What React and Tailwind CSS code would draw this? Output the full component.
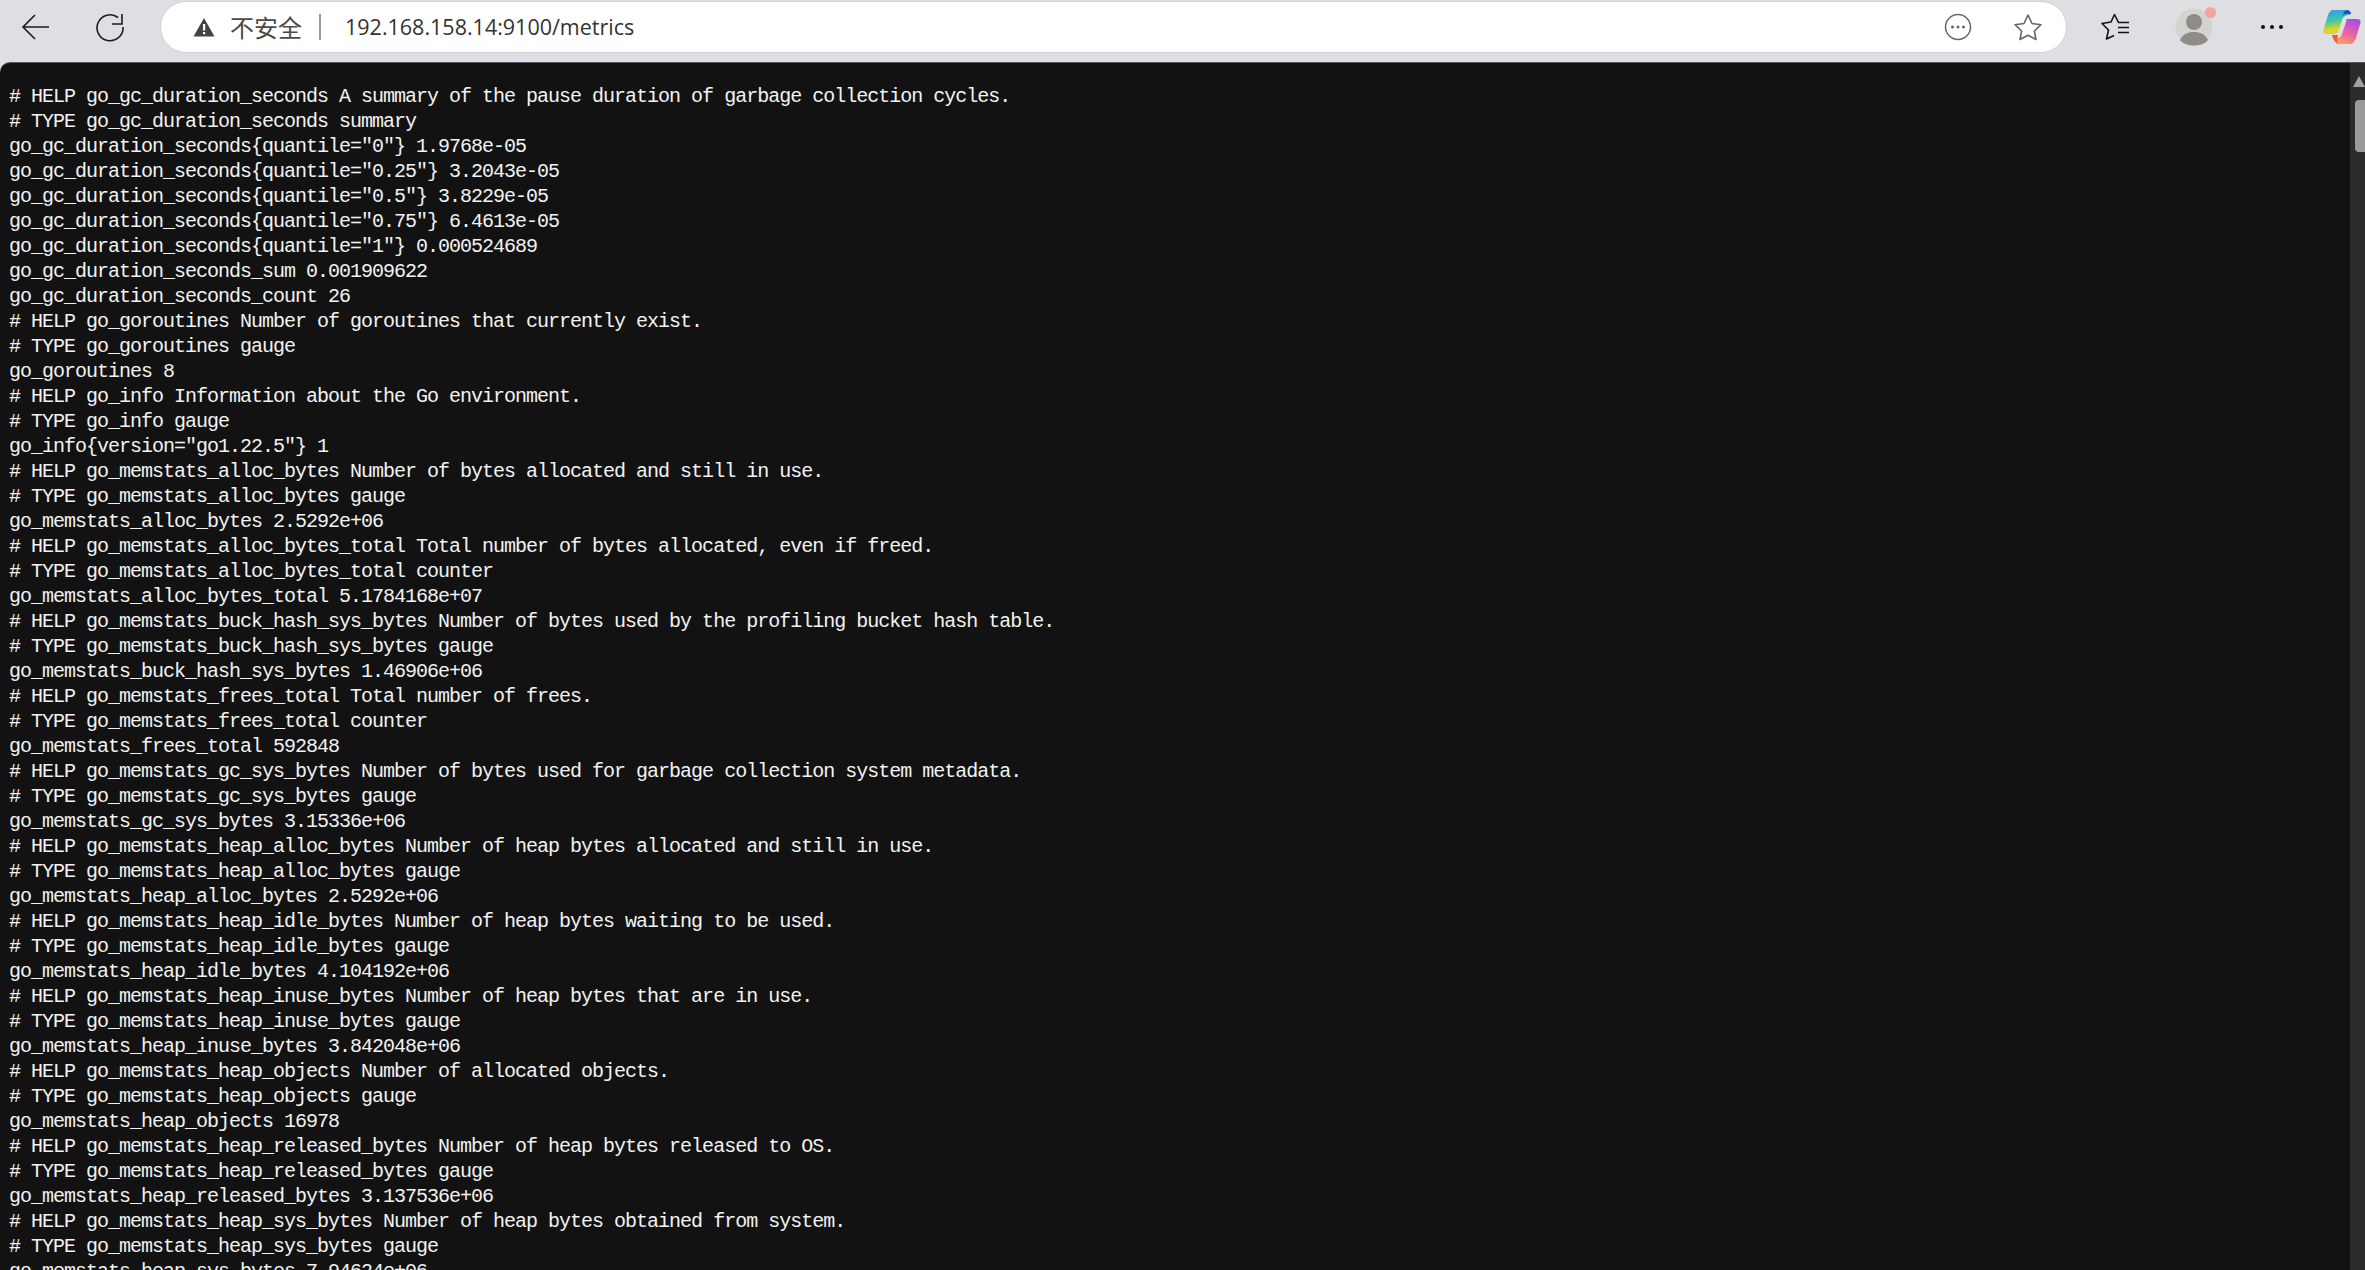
import React from "react";

const LINES = [
  "# HELP go_gc_duration_seconds A summary of the pause duration of garbage collection cycles.",
  "# TYPE go_gc_duration_seconds summary",
  'go_gc_duration_seconds{quantile="0"} 1.9768e-05',
  'go_gc_duration_seconds{quantile="0.25"} 3.2043e-05',
  'go_gc_duration_seconds{quantile="0.5"} 3.8229e-05',
  'go_gc_duration_seconds{quantile="0.75"} 6.4613e-05',
  'go_gc_duration_seconds{quantile="1"} 0.000524689',
  "go_gc_duration_seconds_sum 0.001909622",
  "go_gc_duration_seconds_count 26",
  "# HELP go_goroutines Number of goroutines that currently exist.",
  "# TYPE go_goroutines gauge",
  "go_goroutines 8",
  "# HELP go_info Information about the Go environment.",
  "# TYPE go_info gauge",
  'go_info{version="go1.22.5"} 1',
  "# HELP go_memstats_alloc_bytes Number of bytes allocated and still in use.",
  "# TYPE go_memstats_alloc_bytes gauge",
  "go_memstats_alloc_bytes 2.5292e+06",
  "# HELP go_memstats_alloc_bytes_total Total number of bytes allocated, even if freed.",
  "# TYPE go_memstats_alloc_bytes_total counter",
  "go_memstats_alloc_bytes_total 5.1784168e+07",
  "# HELP go_memstats_buck_hash_sys_bytes Number of bytes used by the profiling bucket hash table.",
  "# TYPE go_memstats_buck_hash_sys_bytes gauge",
  "go_memstats_buck_hash_sys_bytes 1.46906e+06",
  "# HELP go_memstats_frees_total Total number of frees.",
  "# TYPE go_memstats_frees_total counter",
  "go_memstats_frees_total 592848",
  "# HELP go_memstats_gc_sys_bytes Number of bytes used for garbage collection system metadata.",
  "# TYPE go_memstats_gc_sys_bytes gauge",
  "go_memstats_gc_sys_bytes 3.15336e+06",
  "# HELP go_memstats_heap_alloc_bytes Number of heap bytes allocated and still in use.",
  "# TYPE go_memstats_heap_alloc_bytes gauge",
  "go_memstats_heap_alloc_bytes 2.5292e+06",
  "# HELP go_memstats_heap_idle_bytes Number of heap bytes waiting to be used.",
  "# TYPE go_memstats_heap_idle_bytes gauge",
  "go_memstats_heap_idle_bytes 4.104192e+06",
  "# HELP go_memstats_heap_inuse_bytes Number of heap bytes that are in use.",
  "# TYPE go_memstats_heap_inuse_bytes gauge",
  "go_memstats_heap_inuse_bytes 3.842048e+06",
  "# HELP go_memstats_heap_objects Number of allocated objects.",
  "# TYPE go_memstats_heap_objects gauge",
  "go_memstats_heap_objects 16978",
  "# HELP go_memstats_heap_released_bytes Number of heap bytes released to OS.",
  "# TYPE go_memstats_heap_released_bytes gauge",
  "go_memstats_heap_released_bytes 3.137536e+06",
  "# HELP go_memstats_heap_sys_bytes Number of heap bytes obtained from system.",
  "# TYPE go_memstats_heap_sys_bytes gauge",
  "go_memstats_heap_sys_bytes 7.94624e+06",
];

function BackIcon() {
  return (
    <svg width="30" height="30" viewBox="0 0 30 30" fill="none" stroke="#1c1c1c" strokeWidth="1.6">
      <path d="M2 15H28M14 3L2 15L14 27" />
    </svg>
  );
}

function ReloadIcon() {
  return (
    <svg width="30" height="30" viewBox="0 0 30 30" fill="none" stroke="#1c1c1c" strokeWidth="1.6">
      <path d="M23 5.5A13 13 0 1 0 28 15" />
      <path d="M17 12H27V2" />
    </svg>
  );
}

function WarnIcon() {
  return (
    <svg width="22" height="20" viewBox="0 0 22 20">
      <path d="M11 1L21.5 19.5H0.5Z" fill="#444444" />
      <rect x="10" y="7" width="2.2" height="6.5" fill="#ffffff" />
      <rect x="10" y="15" width="2.2" height="2.2" fill="#ffffff" />
    </svg>
  );
}

function DotsCircleIcon() {
  return (
    <svg width="28" height="28" viewBox="0 0 28 28" fill="none">
      <circle cx="14" cy="14" r="12.5" stroke="#666666" strokeWidth="1.5" />
      <circle cx="8.5" cy="14" r="1.5" fill="#666666" />
      <circle cx="14" cy="14" r="1.5" fill="#666666" />
      <circle cx="19.5" cy="14" r="1.5" fill="#666666" />
    </svg>
  );
}

function StarIcon() {
  return (
    <svg width="30" height="28" viewBox="0 0 30 28" fill="none" stroke="#666666" strokeWidth="1.6" strokeLinejoin="round">
      <path d="M15 2L19 10.5L28 11.7L21.4 18L23 26.5L15 22.3L7 26.5L8.6 18L2 11.7L11 10.5Z" />
    </svg>
  );
}

function FavoritesIcon() {
  return (
    <svg width="30" height="28" viewBox="0 0 30 28" fill="none" stroke="#111111" strokeWidth="1.6" strokeLinejoin="round">
      <path d="M17.5 9.5L13.5 1.5L10 9L1 10.5L7.5 17L5.5 26L13 22.5" />
      <path d="M17 9.5H28M17 14.5H28M17 19.5H28" />
    </svg>
  );
}

function ProfileIcon() {
  return (
    <svg width="38" height="38" viewBox="0 0 38 38">
      <circle cx="19" cy="19" r="18.5" fill="#d4d3cf" />
      <circle cx="19" cy="14" r="8" fill="#8f8b87" />
      <path d="M5 32C8 26 13 24 19 24C25 24 30 26 33 32C30 36 24 37.5 19 37.5C14 37.5 8 36 5 32Z" fill="#8f8b87" />
    </svg>
  );
}

function MoreIcon() {
  return (
    <svg width="24" height="6" viewBox="0 0 24 6" fill="#111111">
      <circle cx="3" cy="3" r="2" />
      <circle cx="12" cy="3" r="2" />
      <circle cx="21" cy="3" r="2" />
    </svg>
  );
}

function CopilotIcon() {
  return (
    <svg width="38" height="36" viewBox="0 0 38 36">
      <defs>
        <linearGradient id="cpLeft" x1="0.3" y1="0" x2="0.5" y2="1">
          <stop offset="0" stopColor="#2f9df0" />
          <stop offset="0.45" stopColor="#45c7a0" />
          <stop offset="0.8" stopColor="#e4d422" />
        </linearGradient>
        <linearGradient id="cpRight" x1="0.7" y1="0" x2="0.3" y2="1">
          <stop offset="0" stopColor="#a552dc" />
          <stop offset="0.55" stopColor="#ea62a8" />
          <stop offset="1" stopColor="#fba05a" />
        </linearGradient>
      </defs>
      <path d="M10 1H24L27 6C22 6 20 8 19 11L15 23C14 25 12 25 9 25H4C1 25 0 23 0.5 21L5 6C6 3 8 1 10 1Z" fill="url(#cpLeft)" />
      <path d="M24 1C26 1 28 3 28 5H23C21 5 20 6 19 8L21 3C21.5 2 23 1 24 1Z" fill="#2b49c8" />
      <path d="M24 10H34C37 10 38 12 37.5 14L33 29C32 32 30 35 27 35H14L11 29C16 30 18 28 19 25L23 13C23.5 11 23.5 10 24 10Z" fill="url(#cpRight)" />
      <path d="M9 26H15L14 31C13.5 33 15 35 17 35C13 35 10 31 9 26Z" fill="#ef5a3c" />
    </svg>
  );
}

export default function App() {
  return (
    <div className="h-screen w-full overflow-hidden flex flex-col bg-[#dedfe3]">
      {/* barra del navegador */}
      <div className="h-[62px] shrink-0 flex items-start font-['Open_Sans','Noto_Sans_CJK_SC',sans-serif]">
        <div className="w-[160px] h-[54px] shrink-0 flex items-center pl-[21px] gap-[44px]">
          <BackIcon />
          <ReloadIcon />
        </div>

        <div className="w-[1907px] h-[52px] mt-px shrink-0 flex items-center bg-white rounded-[26px] border border-[#d2d2d2] pl-[32px]">
          <WarnIcon />
          <span className="ml-[15px] text-[24px] text-[#4a4a4a] font-['Noto_Sans_CJK_SC',sans-serif]">不安全</span>
          <span className="ml-[17px] w-[2px] h-[26px] bg-[#999999]" />
          <span className="ml-[24px] text-[21.5px] text-[#333333]">192.168.158.14:9100/metrics</span>
          <div className="ml-auto flex items-center gap-[41px] pr-[23px]">
            <DotsCircleIcon />
            <StarIcon />
          </div>
        </div>

        <div className="flex-1 h-[54px] flex items-center pl-[34px]">
          <FavoritesIcon />
          <div className="relative ml-[44px]">
            <ProfileIcon />
            <span className="absolute -top-[1px] -right-[3px] w-[11px] h-[11px] rounded-full bg-[#f8a3a0]" />
          </div>
          <div className="ml-[47px]">
            <MoreIcon />
          </div>
          <div className="ml-[39px]">
            <CopilotIcon />
          </div>
        </div>
      </div>

      {/* contenido */}
      <div className="flex-1 min-h-0 flex bg-[#121212] rounded-tl-[10px] border-t border-[#55565a] overflow-hidden">
        <pre className="flex-1 min-w-0 overflow-hidden pl-[9px] pt-[21px] text-[20px] leading-[25px] tracking-[-1px] text-[#f2f2f2] font-['Liberation_Mono',monospace]">
          {LINES.join("\n")}
        </pre>
        <div className="w-[15px] shrink-0 bg-[#2b2b2b] flex flex-col items-end">
          <div className="w-0 h-0 mt-[13px] border-l-[6px] border-r-[6px] border-b-[11px] border-l-transparent border-r-transparent border-b-[#a0a0a0] mr-0" />
          <div className="w-[10px] h-[52px] mt-[13px] rounded-l-[4px] bg-[#9a9a9a]" />
        </div>
      </div>
    </div>
  );
}
